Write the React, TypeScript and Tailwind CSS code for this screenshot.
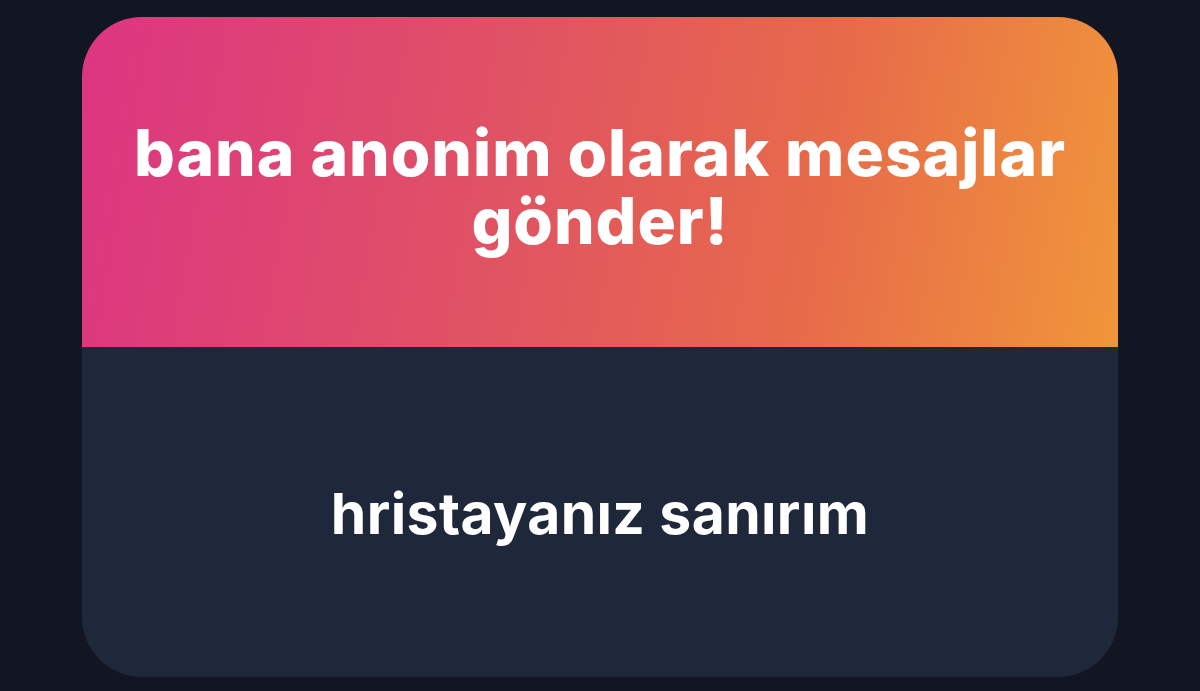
export default function App() {
	return (
		<div className="min-h-screen bg-[#121623] flex items-start justify-center pt-[17px] font-['Inter',sans-serif]">
			<div className="w-[1036px] h-[660px] rounded-[60px] overflow-hidden flex flex-col bg-[#1f283a]">
				{/* header with the pink → orange gradient */}
				<div className="h-[330px] bg-[linear-gradient(100deg,#dc3582_0%,#e05264_40%,#e76a4a_70%,#f0963a_100%)] flex items-center justify-center px-10">
					<h1 className="text-white text-[64px] font-extrabold leading-[68px] text-center tracking-[1px] mt-[9px]">
						bana anonim olarak mesajlar gönder!
					</h1>
				</div>

				{/* message body */}
				<div className="flex-1 flex items-center justify-center">
					<p className="text-white text-[57px] font-bold tracking-[0.4px] mt-[4px]">
						hristayanız sanırım
					</p>
				</div>
			</div>
		</div>
	);
}
